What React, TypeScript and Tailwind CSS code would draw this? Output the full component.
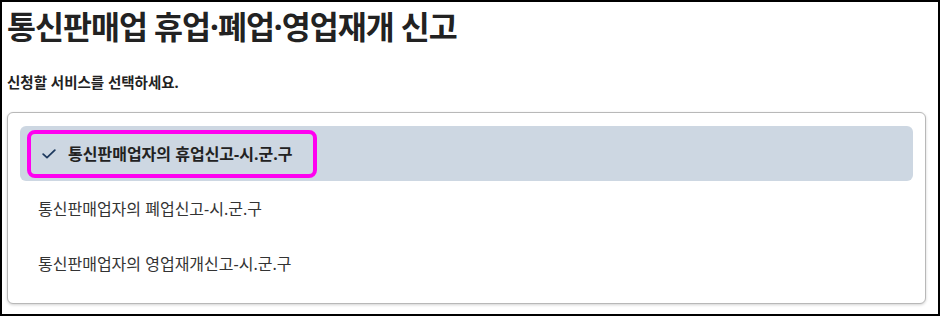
const services = [
  '통신판매업자의 휴업신고-시.군.구',
  '통신판매업자의 폐업신고-시.군.구',
  '통신판매업자의 영업재개신고-시.군.구',
]

function CheckIcon() {
  return (
    <svg width="14" height="10" viewBox="0 0 14 10" fill="none" className="shrink-0">
      <path d="M1.2 5.2 L5 8.6 L12.8 1.2" stroke="#1e3a5f" strokeWidth="1.8" strokeLinecap="round" strokeLinejoin="round" />
    </svg>
  )
}

export default function App() {
  const selected = 0

  return (
    <div
      className="w-[940px] h-[316px] border-2 border-black bg-white text-[#222] overflow-hidden"
      style={{ fontFamily: '"Noto Sans", "Noto Sans CJK KR", sans-serif' }}
    >
      <div className="px-[5px] pt-[3px]">
        <h1 className="text-[31.5px] leading-[44px] font-bold tracking-[-1px] text-[#222]">
          통신판매업 휴업·폐업·영업재개 신고
        </h1>
        <p className="mt-[23px] text-[14.5px] leading-[20px] font-bold text-[#222]">
          신청할 서비스를 선택하세요.
        </p>

        <div className="mt-[20px] w-[919px] rounded-[6px] border border-[#b8b8b8] bg-white px-[12px] pt-[13px] pb-[12px] shadow-[0_1px_3px_rgba(0,0,0,0.18)]">
          {services.map((label, i) =>
            i === selected ? (
              <div key={label} className="flex h-[55px] items-center rounded-[6px] bg-[#cdd7e2] px-[7px]">
                <div className="flex h-[48px] items-center gap-[12px] rounded-[8px] border-4 border-[#ff00f0] pl-[11px] pr-[21px]">
                  <CheckIcon />
                  <span className="text-[16px] font-bold text-[#222]">{label}</span>
                </div>
              </div>
            ) : (
              <div key={label} className="flex h-[55px] items-center px-[18px]">
                <span className="text-[16px] text-[#333]">{label}</span>
              </div>
            )
          )}
        </div>
      </div>
    </div>
  )
}
